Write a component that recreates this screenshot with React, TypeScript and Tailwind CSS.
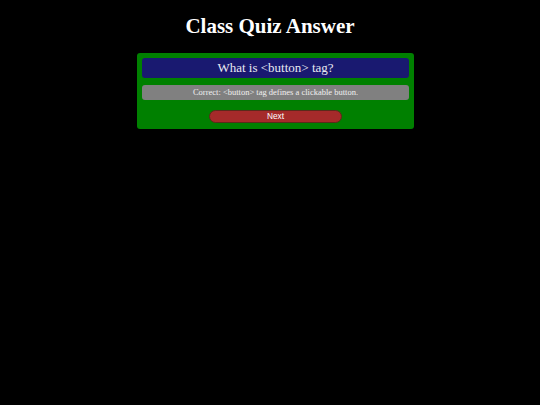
import React from 'react';

const App: React.FC = () => {
  return (
    <div className="min-h-screen w-full bg-black flex flex-col items-center" style={{ minHeight: 405 }}>
      {/* Heading */}
      <h1 className="mt-[14px] h-[24px] leading-[24px] text-[21px] font-bold text-white font-['Liberation_Serif',serif]">
        Class Quiz Answer
      </h1>

      {/* Quiz card */}
      <div className="mt-[15px] ml-[11px] w-[277px] bg-[#008000] rounded-[3px] p-[5px] flex flex-col items-center">
        <div className="w-full h-[20px] bg-[#191970] rounded-[3px] flex items-center justify-center text-[13px] text-[#e8e8f0] font-['Liberation_Serif',serif]">
          What is &lt;button&gt; tag?
        </div>
        <div className="mt-[7px] w-full h-[15px] bg-[#808080] rounded-[3px] flex items-center justify-center text-[8.5px] text-[#f0f0f0] font-['Liberation_Serif',serif]">
          Correct: &lt;button&gt; tag defines a clickable button.
        </div>
        <button className="mt-[10px] mb-[1px] w-[133px] h-[13px] bg-[#a52a2a] border border-[#5a2a1a] rounded-full flex items-center justify-center text-[8.3px] leading-none text-white font-['Liberation_Sans',sans-serif]">
          Next
        </button>
      </div>
    </div>
  );
};

export default App;
